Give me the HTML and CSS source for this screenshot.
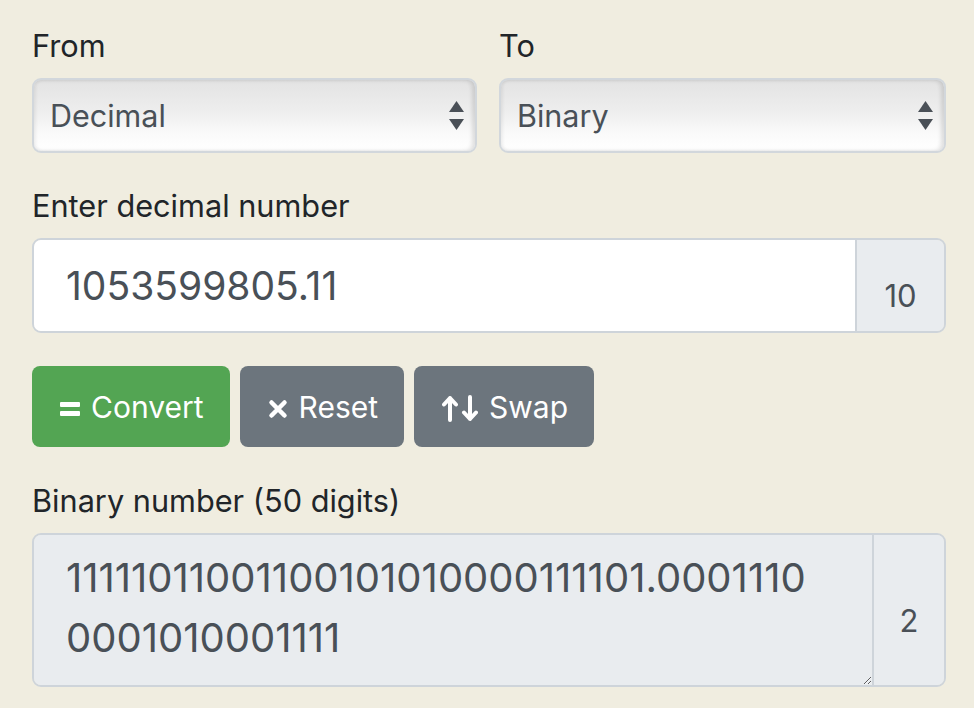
FILE: index.html
```html
<!DOCTYPE html>
<html lang="en">
<head>
<meta charset="utf-8">
<title>Decimal to Binary converter</title>
<link rel="stylesheet" href="styles.css">
</head>
<body>
<div class="page">
  <div class="row2">
    <div class="field">
      <label class="lbl">From</label>
      <div class="select-wrap">
        <select class="sel"><option>Decimal</option></select>
        <svg class="arrows" width="15" height="30" viewBox="0 0 15 30"><polygon points="7.5,0 15,11 0,11"/><polygon points="0,18 15,18 7.5,29"/></svg>
      </div>
    </div>
    <div class="field">
      <label class="lbl">To</label>
      <div class="select-wrap">
        <select class="sel"><option>Binary</option></select>
        <svg class="arrows" width="15" height="30" viewBox="0 0 15 30"><polygon points="7.5,0 15,11 0,11"/><polygon points="0,18 15,18 7.5,29"/></svg>
      </div>
    </div>
  </div>

  <div class="field">
    <label class="lbl">Enter decimal number</label>
    <div class="group in-group">
      <input class="num" type="text" value="1053599805.11">
      <span class="addon addon-in">10</span>
    </div>
  </div>

  <div class="buttons">
    <button class="btn btn-green"><svg class="ico" width="20" height="14" viewBox="0 0 20 14"><rect x="0" y="0" width="20" height="5" rx="1"/><rect x="0" y="9" width="20" height="5" rx="1"/></svg><span>Convert</span></button>
    <button class="btn btn-gray"><svg class="ico" width="20" height="20" viewBox="0 0 20 20"><path d="M3.5 3.5 L16.5 16.5 M16.5 3.5 L3.5 16.5" fill="none" stroke="#fff" stroke-width="4.5" stroke-linecap="round"/></svg><span>Reset</span></button>
    <button class="btn btn-gray"><svg class="ico" width="36" height="27" viewBox="0 0 36 27"><path d="M8 25 V3 M2 9.5 L8 3 L14 9.5 M28 2 V24 M22 17.5 L28 24 L34 17.5" fill="none" stroke="#fff" stroke-width="4" stroke-linecap="round" stroke-linejoin="round"/></svg><span>Swap</span></button>
  </div>

  <div class="field">
    <label class="lbl">Binary number (50 digits)</label>
    <div class="group out-group">
      <textarea class="out" readonly>11111011001100101010000111101.00011100001010001111</textarea>
      <span class="addon addon-out">2</span>
    </div>
  </div>
</div>
</body>
</html>
```

FILE: styles.css
```css
* { box-sizing: border-box; }

html, body {
  margin: 0;
  background: #f0ede0;
}

body {
  font-family: Inter, "Liberation Sans", Arial, sans-serif;
  color: #212529;
}

.page {
  display: flex;
  flex-direction: column;
  width: 914px;
  margin-left: 32px;
  padding-top: 23px;
}

.row2 {
  display: grid;
  grid-template-columns: 445px 447px;
  column-gap: 22px;
}

.field {
  margin-bottom: 30px;
}

.lbl {
  display: block;
  font-size: 30.7px;
  line-height: 45px;
  margin-bottom: 10px;
  color: #212529;
}

.select-wrap {
  position: relative;
}

.sel {
  -webkit-appearance: none;
  appearance: none;
  display: block;
  width: 100%;
  height: 75px;
  border: 2px solid #d2d7dc;
  border-radius: 9px;
  padding: 0 40px 0 16px;
  font-family: inherit;
  font-size: 30.5px;
  color: #495057;
  background: linear-gradient(to bottom, #e3e3e3 0%, #eeeeee 45%, #fafafa 75%, #ffffff 100%);
  box-shadow: inset 2px 0 3px rgba(0,0,0,0.06), inset -3px 0 4px rgba(0,0,0,0.12);
}

.arrows {
  position: absolute;
  right: 13px;
  top: 23px;
  fill: #4a5057;
}

.group {
  display: flex;
  border: 2px solid #ced4da;
  border-radius: 9px;
  overflow: hidden;
}

.in-group { height: 95px; }
.out-group { height: 154px; }

.num {
  flex: 1;
  min-width: 0;
  border: 0;
  outline: none;
  background: #fff;
  padding: 0 0 0 32px;
  font-family: inherit;
  font-size: 39px;
  color: #495057;
}

.addon {
  display: flex;
  align-items: center;
  justify-content: center;
  padding-top: 20px;
  background: #e9ecef;
  border-left: 2px solid #ced4da;
  font-size: 31px;
  color: #495057;
}

.addon-in { width: 89px; }
.addon-out { width: 72px; }

.buttons {
  display: flex;
  gap: 10px;
  margin-top: 3px;
  margin-bottom: 31px;
}

.btn {
  display: inline-flex;
  align-items: center;
  gap: 11px;
  height: 81px;
  padding: 0 26px 0 28px;
  border: 0;
  border-radius: 8px;
  font-family: inherit;
  font-size: 30px;
  color: #fff;
}

.btn-green { background: #53a553; }
.btn-gray { background: #6c757d; }

.ico { fill: #fff; display: block; margin-top: 4px; }

.out {
  flex: 1;
  min-width: 0;
  border: 0;
  outline: none;
  background: #e9ecef;
  padding: 13px 54px 0 32px;
  font-family: inherit;
  font-size: 40px;
  line-height: 60px;
  color: #495057;
  word-break: break-all;
  resize: vertical;
}
```
